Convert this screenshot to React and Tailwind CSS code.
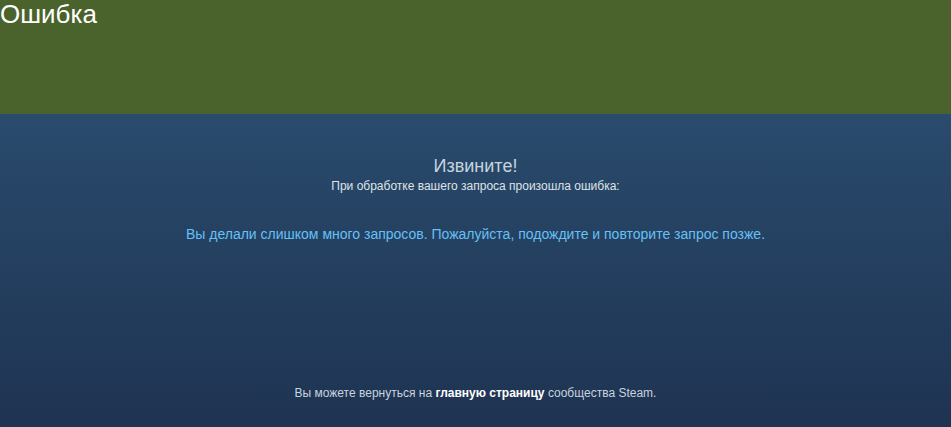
// Community error page: green title bar, gradient body with the error notice.

export default function App() {
  return (
    <div className="min-h-[427px] flex flex-col font-['Liberation_Sans',Arial,sans-serif]">
      {/* Title bar */}
      <div className="h-[114px] bg-[#4a632c] shrink-0">
        <h1 className="text-[26px] leading-[28px] text-white font-normal">Ошибка</h1>
      </div>

      {/* Error body */}
      <div className="flex-1 flex flex-col items-center text-center bg-gradient-to-b from-[#294b6d] to-[#1f3352] pt-[41px] pb-[26px]">
        <h2 className="text-[18px] leading-[22px] text-[#c6d4df]">Извините!</h2>
        <p className="mt-px text-[12px] leading-[16px] text-[#dfe3e6]">
          При обработке вашего запроса произошла ошибка:
        </p>

        <p className="mt-[31px] text-[14px] leading-[18px] text-[#66c0f4]">
          Вы делали слишком много запросов. Пожалуйста, подождите и повторите запрос позже.
        </p>

        <p className="mt-auto text-[12px] leading-[16px] text-[#c6d4df]">
          Вы можете вернуться на{' '}
          <a href="#" className="font-bold text-white">главную страницу</a>{' '}
          сообщества Steam.
        </p>
      </div>
    </div>
  );
}
